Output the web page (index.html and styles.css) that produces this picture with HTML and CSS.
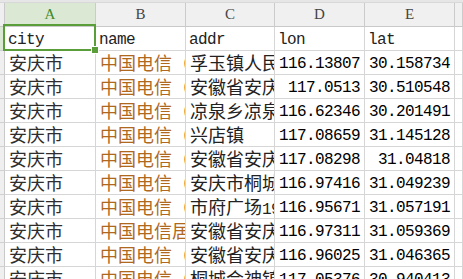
FILE: index.html
```html
<!DOCTYPE html>
<html>
<head>
<meta charset="utf-8">
<link rel="stylesheet" href="styles.css">
</head>
<body>
<div class="topbar"></div>
<div class="sheet">
  <div class="corner"></div>
  <div class="colhead sel">A</div>
  <div class="colhead">B</div>
  <div class="colhead">C</div>
  <div class="colhead">D</div>
  <div class="colhead">E</div>
  <div class="colhead"></div>

  <div class="rowhead sel"></div>
  <div class="cell lat active">city<span class="selbox"><span class="handle"></span></span></div>
  <div class="cell lat">name</div>
  <div class="cell lat">addr</div>
  <div class="cell lat">lon</div>
  <div class="cell lat">lat</div>
  <div class="cell"></div>

  <div class="rowhead"></div>
  <div class="cell cjk city">安庆市</div>
  <div class="cell cjk name">中国电信（安庆</div>
  <div class="cell cjk addr">孚玉镇人民路</div>
  <div class="cell num">116.13807</div>
  <div class="cell num">30.158734</div>
  <div class="cell"></div>

  <div class="rowhead"></div>
  <div class="cell cjk city">安庆市</div>
  <div class="cell cjk name">中国电信（安庆</div>
  <div class="cell cjk addr">安徽省安庆市</div>
  <div class="cell num">117.0513</div>
  <div class="cell num">30.510548</div>
  <div class="cell"></div>

  <div class="rowhead"></div>
  <div class="cell cjk city">安庆市</div>
  <div class="cell cjk name">中国电信（凉泉</div>
  <div class="cell cjk addr">凉泉乡凉泉村</div>
  <div class="cell num">116.62346</div>
  <div class="cell num">30.201491</div>
  <div class="cell"></div>

  <div class="rowhead"></div>
  <div class="cell cjk city">安庆市</div>
  <div class="cell cjk name">中国电信（兴店</div>
  <div class="cell cjk addr">兴店镇</div>
  <div class="cell num">117.08659</div>
  <div class="cell num">31.145128</div>
  <div class="cell"></div>

  <div class="rowhead"></div>
  <div class="cell cjk city">安庆市</div>
  <div class="cell cjk name">中国电信（安庆</div>
  <div class="cell cjk addr">安徽省安庆市</div>
  <div class="cell num">117.08298</div>
  <div class="cell num">31.04818</div>
  <div class="cell"></div>

  <div class="rowhead"></div>
  <div class="cell cjk city">安庆市</div>
  <div class="cell cjk name">中国电信（桐城</div>
  <div class="cell cjk addr">安庆市桐城市</div>
  <div class="cell num">116.97416</div>
  <div class="cell num">31.049239</div>
  <div class="cell"></div>

  <div class="rowhead"></div>
  <div class="cell cjk city">安庆市</div>
  <div class="cell cjk name">中国电信（市府</div>
  <div class="cell cjk addr">市府广场<span class="mono">19</span>号</div>
  <div class="cell num">116.95671</div>
  <div class="cell num">31.057191</div>
  <div class="cell"></div>

  <div class="rowhead"></div>
  <div class="cell cjk city">安庆市</div>
  <div class="cell cjk name">中国电信居民</div>
  <div class="cell cjk addr">安徽省安庆市</div>
  <div class="cell num">116.97311</div>
  <div class="cell num">31.059369</div>
  <div class="cell"></div>

  <div class="rowhead"></div>
  <div class="cell cjk city">安庆市</div>
  <div class="cell cjk name">中国电信（石河</div>
  <div class="cell cjk addr">安徽省安庆市</div>
  <div class="cell num">116.96025</div>
  <div class="cell num">31.046365</div>
  <div class="cell"></div>

  <div class="rowhead"></div>
  <div class="cell cjk city">安庆市</div>
  <div class="cell cjk name">中国电信（桐城</div>
  <div class="cell cjk addr">桐城会神镇</div>
  <div class="cell num">117.05376</div>
  <div class="cell num">30.940413</div>
  <div class="cell"></div>
</div>
</body>
</html>
```
FILE: styles.css
```css
html, body {
  margin: 0;
  padding: 0;
  background: #ffffff;
  overflow: hidden;
  width: 463px;
  height: 279px;
}

.topbar {
  height: 2px;
  background: #e6e6e6;
  border-bottom: 1px solid #d8d8d8;
}

.sheet {
  display: grid;
  grid-template-columns: 5px 91px 90px 89px 90px 90px 1fr;
  grid-auto-rows: 24px;
}

.sheet > div {
  box-sizing: border-box;
  border-right: 1px solid #d6d6d6;
  border-bottom: 1px solid #d6d6d6;
  overflow: hidden;
  white-space: nowrap;
}

.corner {
  background: #efefef;
  border-color: #c9c9c9 !important;
}

.colhead {
  background: #f0f0f0;
  border-right-color: #cbcbcb !important;
  border-bottom-color: #c9c9c9 !important;
  font-family: "Liberation Serif", serif;
  font-size: 15px;
  line-height: 23px;
  text-align: center;
  color: #444444;
}

.colhead.sel {
  background: #dbe8d4;
  color: #3e8a2c;
}

.rowhead {
  background: #efefef;
  border-right-color: #c9c9c9 !important;
  border-bottom-color: #d0d0d0 !important;
}

.rowhead.sel {
  background: #dbe8d4;
}

.cell {
  padding: 0 3px;
  color: #222222;
}

.cell.active {
  overflow: visible !important;
  position: relative;
}

.lat, .num, .mono {
  font-family: "Liberation Mono", monospace;
  font-size: 16px;
  letter-spacing: -0.6px;
  line-height: 23px;
}

.lat, .num {
  padding-top: 2px;
}

.num {
  text-align: right;
  padding-right: 4px;
  color: #000000;
}

.cjk {
  font-family: "Noto Sans CJK SC", sans-serif;
  font-size: 18px;
  line-height: 23px;
  padding-left: 4px;
  letter-spacing: 0;
}

.city { color: #2e2e2e; }
.name { color: #b0681f; }
.addr { color: #222222; }

.selbox {
  position: absolute;
  left: -2px;
  top: -3px;
  width: 93px;
  height: 27px;
  box-sizing: border-box;
  border: 2px solid #5a9e3a;
  pointer-events: none;
}

.handle {
  position: absolute;
  right: -5px;
  bottom: -5px;
  width: 6px;
  height: 6px;
  background: #5a9e3a;
  border: 1px solid #ffffff;
}
```
